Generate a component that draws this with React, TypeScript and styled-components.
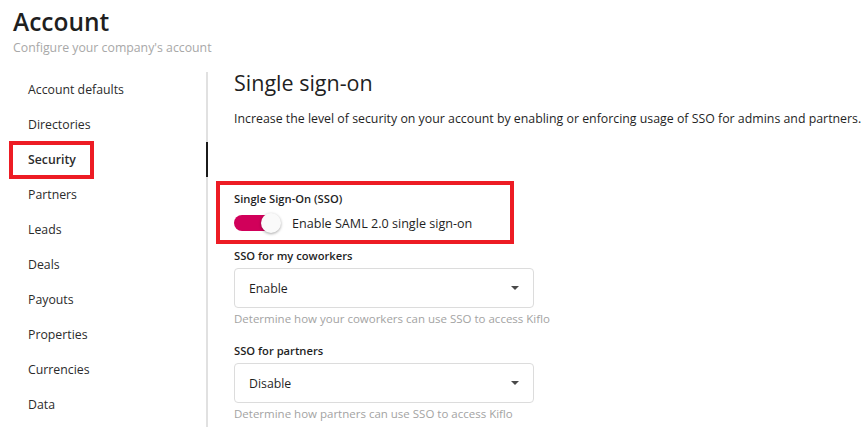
import React from 'react';
import styled, { createGlobalStyle } from 'styled-components';

const GlobalStyle = createGlobalStyle`
  html, body {
    margin: 0;
    padding: 0;
    background: #fff;
  }
  body {
    font-family: "Open Sans", "Noto Sans", sans-serif;
    color: #222;
    -webkit-font-smoothing: antialiased;
  }
`;

const Page = styled.div`
  padding: 7px 13px 0;
  height: 427px;
  box-sizing: border-box;
  overflow: hidden;
`;

const Title = styled.h1`
  margin: 0;
  font-size: 24.5px;
  line-height: 30px;
  font-weight: 600;
  color: #1f1f1f;
`;

const Subtitle = styled.p`
  margin: 2px 0 0;
  font-size: 12.3px;
  line-height: 18px;
  color: #a8a8a8;
`;

const Body = styled.div`
  display: grid;
  grid-template-columns: 195px 1fr;
  margin-top: 15px;
  min-height: 360px;
`;

const Nav = styled.nav`
  display: flex;
  flex-direction: column;
  border-right: 2px solid #e1e1e1;
`;

const NavRow = styled.div<{ $active?: boolean }>`
  height: 35px;
  display: flex;
  align-items: center;
  padding-left: 15px;
  margin-right: -2px;
  border-right: 2px solid ${p => (p.$active ? '#1b1b1b' : 'transparent')};
  font-size: 12.3px;
  color: #2b2b2b;
  font-weight: ${p => (p.$active ? 600 : 400)};
  cursor: pointer;
`;

const NavLabel = styled.span<{ $marked?: boolean }>`
  display: inline-flex;
  align-items: center;
  height: 100%;
  ${p =>
    p.$marked &&
    `
    height: 30px;
    margin-left: -19px;
    padding: 0 14px 0 15px;
    border: 4px solid #ed1c24;
  `}
`;

const Content = styled.main`
  padding-left: 26px;
`;

const Heading = styled.h2`
  margin: -3px 0 0;
  font-size: 21.5px;
  line-height: 28px;
  font-weight: 400;
  color: #1f1f1f;
`;

const Description = styled.p`
  margin: 13px 0 0;
  font-size: 12.35px;
  line-height: 18px;
  color: #1f1f1f;
  white-space: nowrap;
`;

const Marked = styled.div`
  width: fit-content;
  margin: 53px 0 0 -18px;
  padding: 6px 38px 6px 14px;
  border: 4px solid #ed1c24;
`;

const FieldLabel = styled.div<{ $gap?: number }>`
  margin-top: ${p => p.$gap ?? 0}px;
  font-size: 11.2px;
  line-height: 16px;
  font-weight: 600;
  color: #1f1f1f;
`;

const ToggleRow = styled.label`
  display: flex;
  align-items: center;
  gap: 11px;
  height: 22px;
  margin-top: 5px;
  font-size: 12.6px;
  color: #1f1f1f;
`;

const Track = styled.span<{ $on: boolean }>`
  position: relative;
  display: inline-block;
  width: 44px;
  height: 16px;
  border-radius: 8px;
  background: ${p => (p.$on ? '#d1005a' : '#bdbdbd')};
  margin-right: 3px;
`;

const Thumb = styled.span<{ $on: boolean }>`
  position: absolute;
  top: -2px;
  left: ${p => (p.$on ? '27px' : '-3px')};
  width: 20px;
  height: 20px;
  border-radius: 50%;
  background: #fafafa;
  box-shadow: 0 1px 3px rgba(0, 0, 0, 0.35);
`;

const SelectBox = styled.div`
  display: flex;
  align-items: center;
  justify-content: space-between;
  box-sizing: border-box;
  width: 300px;
  height: 40px;
  margin-top: 4px;
  padding: 0 14px;
  border: 1px solid #dcdcdc;
  border-radius: 4px;
  font-size: 12.3px;
  color: #1f1f1f;
`;

const Caret = styled.span`
  width: 0;
  height: 0;
  border-left: 4px solid transparent;
  border-right: 4px solid transparent;
  border-top: 4px solid #4a4a4a;
`;

const Helper = styled.div`
  margin-top: 4px;
  font-size: 11.5px;
  line-height: 14px;
  color: #a3a3a3;
  white-space: nowrap;
`;

const navItems = [
  'Account defaults',
  'Directories',
  'Security',
  'Partners',
  'Leads',
  'Deals',
  'Payouts',
  'Properties',
  'Currencies',
  'Data',
];

const Toggle = ({ on }: { on: boolean }) => (
  <Track $on={on}>
    <Thumb $on={on} />
  </Track>
);

const SelectField = ({ label, value, helper, gap }: { label: string; value: string; helper: string; gap: number }) => (
  <>
    <FieldLabel $gap={gap}>{label}</FieldLabel>
    <SelectBox>
      <span>{value}</span>
      <Caret />
    </SelectBox>
    <Helper>{helper}</Helper>
  </>
);

export default function App() {
  return (
    <>
      <GlobalStyle />
      <Page>
        <Title>Account</Title>
        <Subtitle>Configure your company's account</Subtitle>
        <Body>
          <Nav>
            {navItems.map(item => (
              <NavRow key={item} $active={item === 'Security'}>
                <NavLabel $marked={item === 'Security'}>{item}</NavLabel>
              </NavRow>
            ))}
          </Nav>
          <Content>
            <Heading>Single sign-on</Heading>
            <Description>
              Increase the level of security on your account by enabling or enforcing usage of SSO for admins and partners.
            </Description>
            <Marked>
              <FieldLabel>Single Sign-On (SSO)</FieldLabel>
              <ToggleRow>
                <Toggle on />
                Enable SAML 2.0 single sign-on
              </ToggleRow>
            </Marked>
            <SelectField
              gap={4}
              label="SSO for my coworkers"
              value="Enable"
              helper="Determine how your coworkers can use SSO to access Kiflo"
            />
            <SelectField
              gap={17}
              label="SSO for partners"
              value="Disable"
              helper="Determine how partners can use SSO to access Kiflo"
            />
          </Content>
        </Body>
      </Page>
    </>
  );
}
